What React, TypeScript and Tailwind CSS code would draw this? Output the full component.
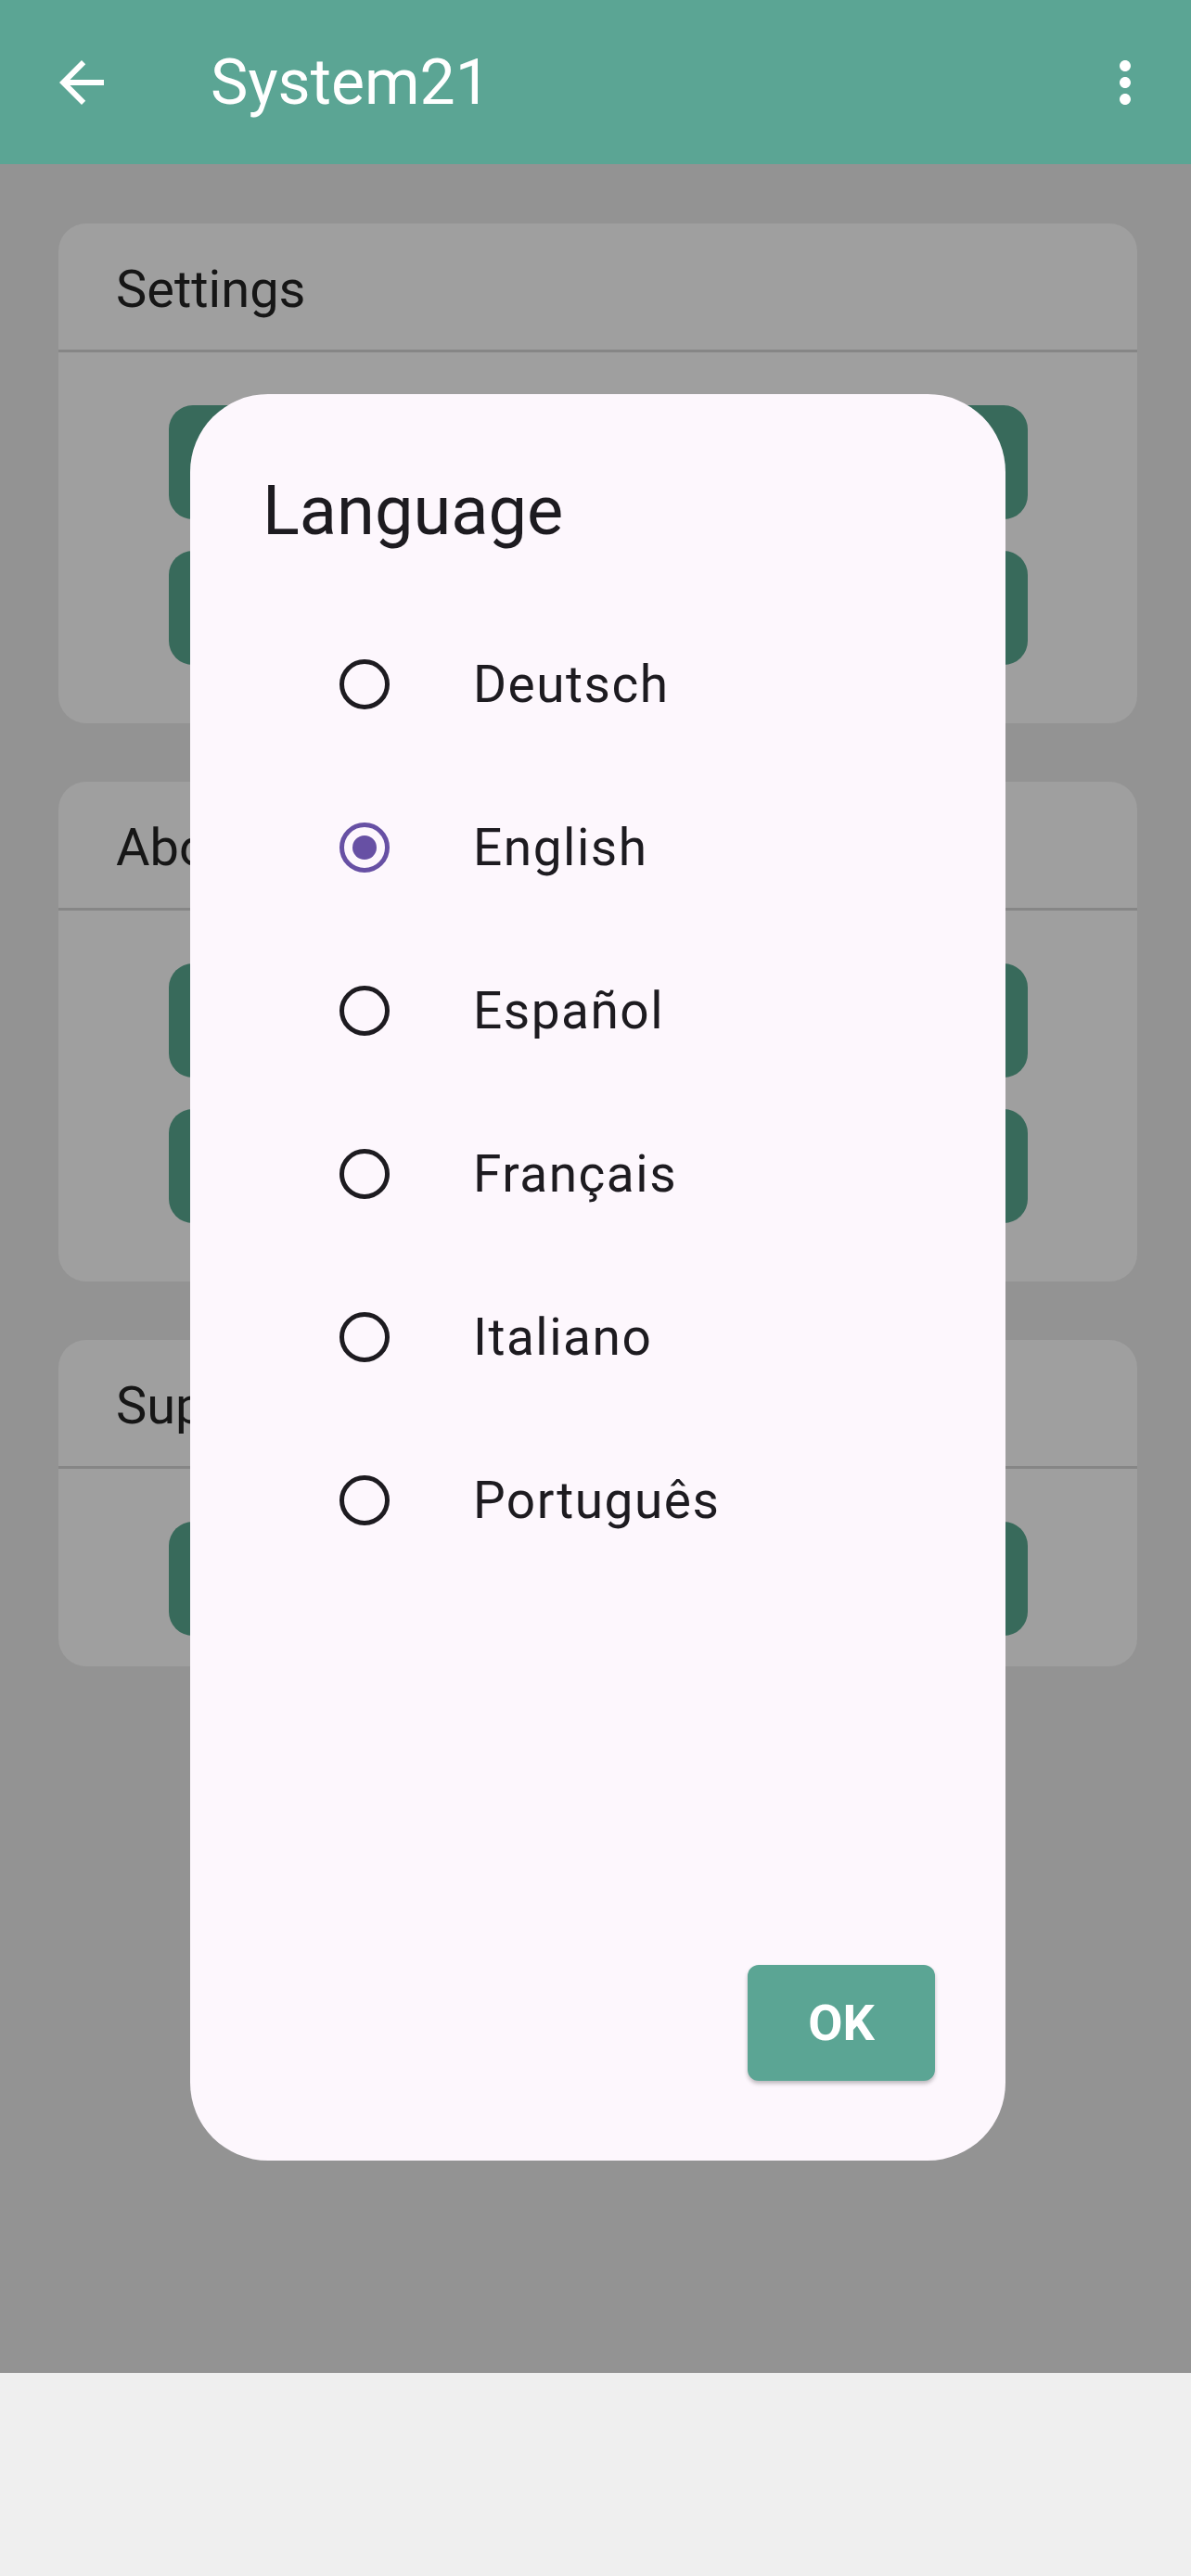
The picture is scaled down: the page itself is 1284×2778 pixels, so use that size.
import React from "react";

const languages = ["Deutsch", "English", "Español", "Français", "Italiano", "Português"];

function Radio({ checked }: { checked: boolean }) {
  return (
    <div
      className={`flex h-[54px] w-[54px] items-center justify-center rounded-full border-[5px] ${
        checked ? "border-[#6750a4]" : "border-[#1d1b20]"
      }`}
    >
      {checked && <div className="h-[26px] w-[26px] rounded-full bg-[#6750a4]" />}
    </div>
  );
}

function Card({ title, buttons, bottom }: { title: string; buttons: number; bottom: string }) {
  return (
    <div className={`ml-[63px] w-[1163px] rounded-[30px] bg-[#9f9f9f] ${bottom}`}>
      <div className="flex h-[136px] items-center pl-[62px] pt-[6px] text-[56px] text-[#161616]">{title}</div>
      <div className="h-[3px] bg-[#868686]" />
      <div className="flex flex-col gap-[34px] pt-[57px]">
        {Array.from({ length: buttons }).map((_, i) => (
          <div key={i} className="mx-auto h-[123px] w-[926px] rounded-[26px] bg-[#386a5b]" />
        ))}
      </div>
    </div>
  );
}

export default function App() {
  const selected = "English";

  return (
    <div className="relative flex w-[1284px] flex-col font-['Roboto',sans-serif]">
      <div className="flex h-[2559px] flex-col bg-[#939393]">
        {/* App bar */}
        <div className="relative flex h-[177px] items-center bg-[#5ba594]">
          <svg viewBox="0 0 24 24" className="ml-[52px] h-[72px] w-[72px] fill-white">
            <path d="M20 11H7.83l5.59-5.59L12 4l-8 8 8 8 1.41-1.41L7.83 13H20v-2z" />
          </svg>
          <span className="ml-[103px] text-[68px] leading-none text-white">System21</span>
          <svg viewBox="0 0 24 24" className="ml-auto mr-[35px] h-[72px] w-[72px] fill-white">
            <path d="M12 8c1.1 0 2-.9 2-2s-.9-2-2-2-2 .9-2 2 .9 2 2 2zm0 2c-1.1 0-2 .9-2 2s.9 2 2 2 2-.9 2-2-.9-2-2-2zm0 6c-1.1 0-2 .9-2 2s.9 2 2 2 2-.9 2-2-.9-2-2-2z" />
          </svg>
        </div>

        {/* Cards under the scrim */}
        <div className="flex flex-col gap-[63px] pt-[64px]">
          <Card title="Settings" buttons={2} bottom="pb-[63px]" />
          <Card title="About" buttons={2} bottom="pb-[63px]" />
          <Card title="Support" buttons={1} bottom="pb-[33px]" />
        </div>
      </div>

      {/* Bottom area */}
      <div className="h-[219px] bg-[#efefef]" />

      {/* Language dialog */}
      <div className="absolute left-[205px] top-[425px] flex h-[1905px] w-[879px] flex-col rounded-[84px] bg-[#fdf7fd] pt-[72px]">
        <div className="flex h-[106px] items-center pl-[78px] text-[74px] text-[#1d1b20]">Language</div>
        <div className="mt-[47px] flex flex-col">
          {languages.map((lang) => (
            <div key={lang} className="flex h-[176px] items-center">
              <div className="ml-[161px]">
                <Radio checked={lang === selected} />
              </div>
              <span className="ml-[90px] text-[55px] tracking-[1.5px] text-[#1d1b20]">{lang}</span>
            </div>
          ))}
        </div>
        <div className="mt-auto flex justify-end pb-[86px] pr-[76px]">
          <button className="flex h-[125px] w-[202px] items-center justify-center rounded-[12px] bg-[#5ba594] text-[54px] font-bold text-white shadow-[0_3px_4px_rgba(0,0,0,0.25)]">
            OK
          </button>
        </div>
      </div>
    </div>
  );
}
